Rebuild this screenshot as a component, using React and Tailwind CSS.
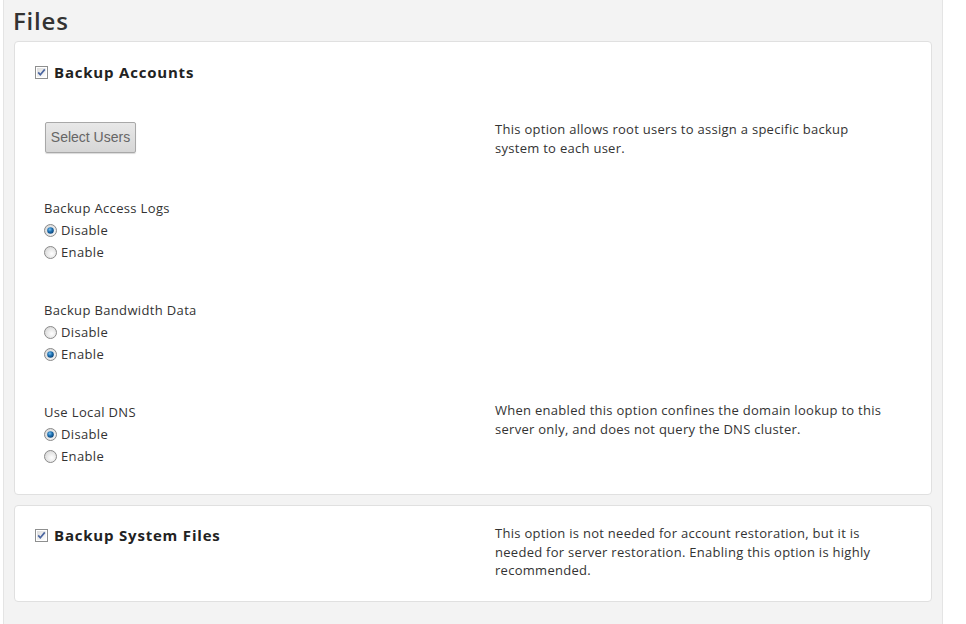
import React from "react";

const font = { fontFamily: '"Open Sans", "Noto Sans", sans-serif' };

function Check() {
  return (
    <svg width="13" height="13" viewBox="0 0 13 13" className="shrink-0">
      <defs>
        <linearGradient id="cbg" x1="0" y1="0" x2="1" y2="1">
          <stop offset="0" stopColor="#dcdcdc" />
          <stop offset="1" stopColor="#ffffff" />
        </linearGradient>
      </defs>
      <rect x="0.5" y="0.5" width="12" height="12" fill="#fff" stroke="#8e8f8f" />
      <rect x="2" y="2" width="9" height="9" fill="url(#cbg)" />
      <path d="M3.2 6.4 L5.3 8.8 L9.8 3.4" fill="none" stroke="#4b66a0" strokeWidth="1.7" />
    </svg>
  );
}

function Radio({ checked }) {
  return (
    <svg width="13" height="13" viewBox="0 0 13 13" className="shrink-0">
      <defs>
        <radialGradient id="rbg" cx="0.6" cy="0.6" r="0.7">
          <stop offset="0" stopColor="#ffffff" />
          <stop offset="1" stopColor="#d4d4d4" />
        </radialGradient>
        <radialGradient id="rdot" cx="0.4" cy="0.35" r="0.7">
          <stop offset="0" stopColor="#7cc1f0" />
          <stop offset="0.5" stopColor="#1d6fb0" />
          <stop offset="1" stopColor="#0b3f72" />
        </radialGradient>
      </defs>
      <circle cx="6.5" cy="6.5" r="6" fill="url(#rbg)" stroke="#8a8a8a" strokeWidth="1" />
      {checked && <circle cx="6.5" cy="6.5" r="3.3" fill="url(#rdot)" />}
    </svg>
  );
}

function RadioGroup({ label, value }) {
  return (
    <div className="text-[13px] leading-[22px] text-[#333] tracking-[0.35px]">
      <div>{label}</div>
      <div className="flex items-center gap-[4px]">
        <Radio checked={value === "disable"} />
        <span>Disable</span>
      </div>
      <div className="flex items-center gap-[4px]">
        <Radio checked={value === "enable"} />
        <span>Enable</span>
      </div>
    </div>
  );
}

function Desc({ children, lh = "leading-[19px]" }) {
  return <div className={`w-[392px] text-[13px] text-[#333] tracking-[0.28px] ${lh}`}>{children}</div>;
}

export default function App() {
  return (
    <div className="w-[966px] h-[624px] bg-white overflow-hidden" style={font}>
      <div className="ml-[3px] w-[940px] h-[624px] bg-[#f3f3f3] border-l border-r border-[#e4e4e4] pl-[10px] pr-[10px]">
        <h1 className="text-[24px] leading-[40px] font-semibold text-[#333] pt-px tracking-[0.8px] -ml-px">Files</h1>

        <div className="bg-white border border-[#e0e0e0] rounded-[4px] px-[20px] pt-[19px] pb-[27px]">
          <div className="flex items-center gap-[6px] text-[15px] leading-[22px] font-bold text-[#222] tracking-[0.8px]">
            <Check />
            <span>Backup Accounts</span>
          </div>

          <div className="flex items-start mt-[36px]">
            <div className="w-[460px] pl-[10px]">
              <button className="mt-[3px] w-[91px] h-[31px] border border-[#a8a8a8] rounded-[2px] bg-gradient-to-b from-[#e8e8e8] to-[#d6d6d6] shadow-[0_1px_1px_rgba(0,0,0,0.15)] text-[14px] text-[#666]" style={{ fontFamily: '"Liberation Sans", Arial, sans-serif' }}>
                Select Users
              </button>
            </div>
            <div className="pt-px">
              <Desc>This option allows root users to assign a specific backup system to each user.</Desc>
            </div>
          </div>

          <div className="flex items-start mt-[39px]">
            <div className="w-[460px] pl-[9px]">
              <RadioGroup label="Backup Access Logs" value="disable" />
            </div>
          </div>

          <div className="flex items-start mt-[36px]">
            <div className="w-[460px] pl-[9px]">
              <RadioGroup label="Backup Bandwidth Data" value="enable" />
            </div>
          </div>

          <div className="flex items-start mt-[36px]">
            <div className="w-[460px] pl-[9px]">
              <RadioGroup label="Use Local DNS" value="disable" />
            </div>
            <Desc>When enabled this option confines the domain lookup to this server only, and does not query the DNS cluster.</Desc>
          </div>
        </div>

        <div className="mt-[10px] bg-white border border-[#e0e0e0] rounded-[4px] px-[20px] pt-[18px] pb-[21px] flex items-start">
          <div className="w-[460px] flex items-center gap-[6px] text-[15px] leading-[22px] font-bold text-[#222] tracking-[0.8px]">
            <Check />
            <span>Backup System Files</span>
          </div>
          <Desc lh="leading-[18.5px]">This option is not needed for account restoration, but it is needed for server restoration. Enabling this option is highly recommended.</Desc>
        </div>
      </div>
    </div>
  );
}
